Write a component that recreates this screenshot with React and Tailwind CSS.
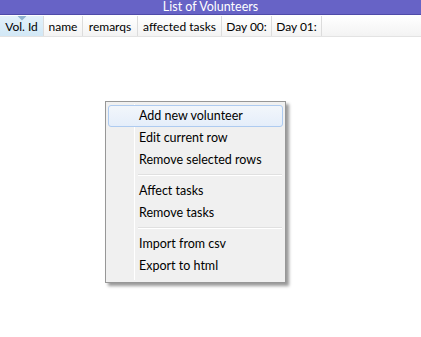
const columns = [
  { label: 'Vol. Id', w: 'w-[44px]', active: true },
  { label: 'name', w: 'w-[39px]' },
  { label: 'remarqs', w: 'w-[55px]' },
  { label: 'affected tasks', w: 'w-[84px]' },
  { label: 'Day 00:', w: 'w-[50px]' },
  { label: 'Day 01:', w: 'w-[50px]' },
];

const menuGroups = [
  ['Add new volunteer', 'Edit current row', 'Remove selected rows'],
  ['Affect tasks', 'Remove tasks'],
  ['Import from csv', 'Export to html'],
];

const App = () => {
  return (
    <div className="relative w-[421px] h-[337px] bg-white overflow-hidden font-['Lato','Noto_Sans',sans-serif] text-[12.5px] text-black">
      {/* Title bar */}
      <div className="h-[15px] bg-[#6763c6] border-b border-[#4f4ba8] text-white text-[12.5px] leading-[14px] text-center">
        List of Volunteers
      </div>

      {/* Header */}
      <div className="mt-[1px] h-[21px] flex text-[12px] bg-gradient-to-b from-white to-[#f3f3f3] border-b border-[#e3e3e3]">
        {columns.map((c) => (
          <div
            key={c.label}
            className={`relative ${c.w} shrink-0 flex items-center justify-center pt-[2px] border-r border-[#dcdcdc] ${c.active ? 'bg-gradient-to-b from-[#e3f1fa] to-[#d2e8f6] border-[#9cc9e6]' : ''}`}
          >
            {c.active && (
              <svg className="absolute top-0 left-1/2 -translate-x-1/2" width="9" height="5" viewBox="0 0 9 5">
                <path d="M0 0 H9 L4.5 4.5 Z" fill="#8fb3cf" />
              </svg>
            )}
            <span className="leading-none">{c.label}</span>
          </div>
        ))}
        <div className="flex-1" />
      </div>

      {/* Context menu */}
      <div className="absolute left-[105px] top-[101px] w-[181px] bg-[#f0f0f0] border border-[#979797] shadow-[3px_3px_3px_rgba(0,0,0,0.4)] pt-[3px] pb-[5px] px-[2px]">
        <div className="absolute left-[28px] top-[2px] bottom-[2px] w-[1px] bg-[#e2e2e2] border-r border-white" />
        {menuGroups.map((group, gi) => (
          <div key={gi}>
            {gi > 0 && (
              <div className="ml-[30px] mr-[1px] mt-[3px] mb-[4px] h-[2px] border-t border-[#e0e0e0] border-b border-b-white" />
            )}
            {group.map((item, i) => (
              <div
                key={item}
                className={`relative h-[22px] flex items-center rounded-[3px] ${gi === 0 && i === 0 ? 'bg-gradient-to-b from-[#f2f6fb] to-[#e5eefa] border border-[#aecbf0] pl-[30px]' : 'border border-transparent pl-[30px]'}`}
              >
                {item}
              </div>
            ))}
          </div>
        ))}
      </div>
    </div>
  );
};

export default App;
